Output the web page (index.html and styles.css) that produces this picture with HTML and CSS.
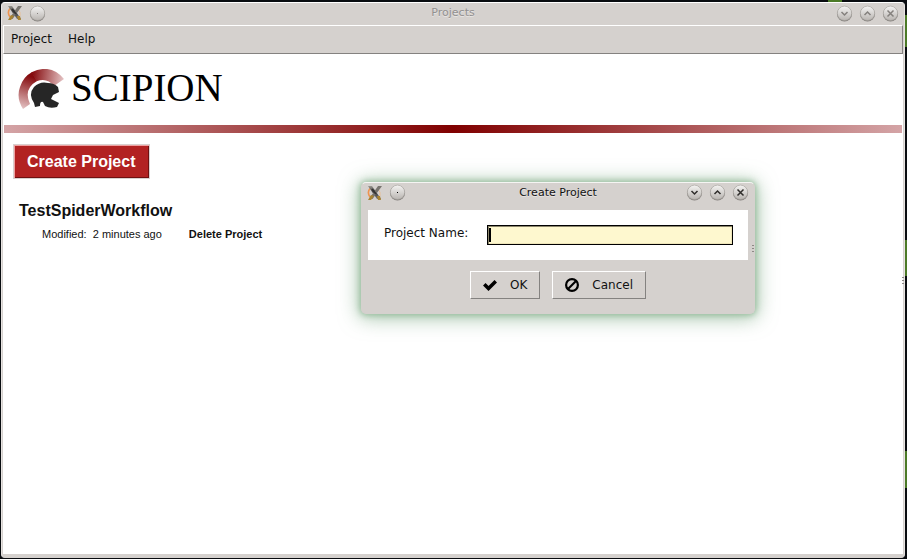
FILE: index.html
```
<!DOCTYPE html>
<html lang="en">
<head>
<meta charset="utf-8">
<title>Projects</title>
<link rel="stylesheet" href="styles.css">
</head>
<body>
<svg class="defs" aria-hidden="true">
  <defs>
    <linearGradient id="knob" x1="0" y1="0" x2="0" y2="1"><stop offset="0" stop-color="#f4f3f2"/><stop offset="1" stop-color="#b9b5b1"/></linearGradient>
    <linearGradient id="blade" x1="0" y1="0" x2="0" y2="1"><stop offset="0" stop-color="#99968f"/><stop offset=".5" stop-color="#3a3a3a"/><stop offset="1" stop-color="#777"/></linearGradient>
    <symbol id="x-logo" viewBox="0 0 16 16">
      <path d="M3.500 3Q-.5 7 3 12" fill="none" stroke="#ee9450" stroke-width="1.600"/>
      <path d="M11 4Q14 7 13 11" fill="none" stroke="#e8c098" stroke-width="1"/>
      <path d="M1 1h4l9 13h-4z" fill="url(#blade)"/>
      <path d="M11 1h4L5.500 14H2z" fill="#77746e"/>
      <path d="M4 10l3 1-3 4H1zM10 11h3l1 4h-3z" fill="#a98330"/>
      <path d="M5 4l4 5" stroke="#333" stroke-width="2"/>
    </symbol>
    <symbol id="disc" viewBox="0 0 17 17">
      <circle cx="8.5" cy="9" r="7.5" fill="#85817e"/>
      <circle cx="8.5" cy="8.3" r="7.2" fill="url(#knob)" stroke="#a19d99" stroke-width=".6"/>
    </symbol>
  </defs>
</svg>
<div class="desktop">
  <i class="leaf leaf-top"></i><i class="leaf leaf-a"></i><i class="leaf leaf-b"></i><i class="leaf leaf-c"></i>
  <main class="window">
    <header class="titlebar">
      <svg class="app-icon"><use href="#x-logo"/></svg>
      <button class="knob" aria-label="Window menu"><svg viewBox="0 0 17 17"><use href="#disc"/><path class="dot" d="M8 8h1v1H8z"/></svg></button>
      <h1 class="title">Projects</h1>
      <div class="controls">
        <button class="knob" aria-label="Minimize"><svg viewBox="0 0 17 17"><use href="#disc"/><path class="mark" d="M5.5 7l3 3 3-3"/></svg></button>
        <button class="knob" aria-label="Maximize"><svg viewBox="0 0 17 17"><use href="#disc"/><path class="mark" d="M5.5 10l3-3 3 3"/></svg></button>
        <button class="knob" aria-label="Close"><svg viewBox="0 0 17 17"><use href="#disc"/><path class="mark" d="M5.5 5.5l6 6m0-6l-6 6"/></svg></button>
      </div>
    </header>
    <nav class="menubar"><button class="menu">Project</button><button class="menu">Help</button></nav>
    <section class="content">
      <div class="brand">
        <svg class="helmet" viewBox="0 0 48 42" aria-hidden="true">
          <defs>
            <linearGradient id="crest" gradientUnits="userSpaceOnUse" x1="14" y1="8" x2="4" y2="40"><stop offset="0" stop-color="#850b0e"/><stop offset="1" stop-color="#e6c6c7"/></linearGradient>
            <linearGradient id="crest2" gradientUnits="userSpaceOnUse" x1="14" y1="8" x2="46" y2="12"><stop offset="0" stop-color="#850b0e"/><stop offset="1" stop-color="#e6c6c7"/></linearGradient>
          </defs>
          <path d="M5 40Q-2 29 2 18Q5 8 14 3L19 12Q5 20 12 35z" fill="url(#crest)"/>
          <path d="M13.500 3.300Q33 -6 46 10L36 17Q29 8 18.500 12.300z" fill="url(#crest2)"/>
          <path d="M17 38L16 34Q10 25 16 18Q22 12 30 14Q36 14 40 18L41 23L35 26L33 30L41 34L39 38Q32 40 27 37L25 33Q22 32 22 37z" fill="#262626"/>
        </svg>
        <span class="wordmark">SCIPION</span>
      </div>
      <div class="rule"></div>
      <div class="projects">
        <button class="create">Create Project</button>
        <article class="project">
          <h2 class="project-name">TestSpiderWorkflow</h2>
          <p class="meta"><span>Modified:&nbsp; 2 minutes ago</span><a class="delete" href="#">Delete Project</a></p>
        </article>
      </div>
    </section>
    <i class="grip"></i>
  </main>
  <form class="dialog" role="dialog" aria-labelledby="dialog-title">
    <header class="titlebar">
      <svg class="app-icon"><use href="#x-logo"/></svg>
      <button type="button" class="knob" aria-label="Window menu"><svg viewBox="0 0 17 17"><use href="#disc"/><path d="M8 8h1v1H8z"/></svg></button>
      <h2 class="title" id="dialog-title">Create Project</h2>
      <div class="controls">
        <button type="button" class="knob" aria-label="Minimize"><svg viewBox="0 0 17 17"><use href="#disc"/><path class="mark" d="M5.5 7l3 3 3-3"/></svg></button>
        <button type="button" class="knob" aria-label="Maximize"><svg viewBox="0 0 17 17"><use href="#disc"/><path class="mark" d="M5.5 10l3-3 3 3"/></svg></button>
        <button type="button" class="knob" aria-label="Close"><svg viewBox="0 0 17 17"><use href="#disc"/><path class="mark" d="M5.5 5.5l6 6m0-6l-6 6"/></svg></button>
      </div>
    </header>
    <div class="field">
      <label for="project-name">Project Name:</label>
      <div class="entry"><input id="project-name" type="text"><i class="caret"></i></div>
    </div>
    <div class="actions">
      <button type="button" class="action"><svg viewBox="0 0 14 14"><path d="M1.3 6.3L5.5 10.5L12.8 3.2" fill="none" stroke="#000" stroke-width="3.6"/></svg>OK</button>
      <button type="button" class="action"><svg viewBox="0 0 14 14"><circle cx="7" cy="7" r="5.9" fill="none" stroke="#000" stroke-width="2.2"/><path d="M3 11l8-8" stroke="#000" stroke-width="2.2"/></svg>Cancel</button>
    </div>
    <i class="grip"></i>
  </form>
</div>
</body>
</html>
```
FILE: styles.css
```
* { box-sizing: border-box; }
body { margin: 0; background: #090c10; color: #111; font: 12px/16px "DejaVu Sans", sans-serif; }
button { font: inherit; color: inherit; margin: 0; border: 0; padding: 0; background: none; }
h1, h2, p { margin: 0; }
.defs { position: absolute; width: 0; height: 0; }
.desktop { position: relative; display: flex; min-height: 100vh; padding: 2px 2px 1px 1px; overflow: hidden; }
.leaf { position: absolute; background: #4c7a27; }
.leaf-top { top: 0; right: 65px; width: 14px; height: 2px; }
.leaf-a { right: 0; top: 15px; width: 2px; height: 32px; }
.leaf-b { right: 0; top: 240px; width: 2px; height: 36px; }
.leaf-c { right: 0; top: 451px; width: 2px; height: 37px; }

.window { position: relative; flex: 1; display: flex; flex-direction: column; padding: 0 1px 3px; background: #d5d1ce; border: 1px solid #e8e4e2; border-top-color: #fff; border-bottom-color: #d5d1ce; border-radius: 4px; }
.titlebar { display: grid; grid-template-columns: 16px 17px 1fr auto; align-items: center; gap: 6px; height: 22px; padding: 0 4px 2px; }
.app-icon { width: 16px; height: 16px; }
.knob { width: 17px; height: 17px; }
.knob svg { display: block; width: 17px; height: 17px; }
.mark { fill: none; stroke: #2f2d2b; stroke-width: 1.5; }
.title { padding-left: 24px; font-size: 11px; font-weight: 400; text-align: center; text-shadow: 0 1px #e8e5e3; }
.controls { display: flex; gap: 6px; }
.window > .titlebar .title { color: #929090; }
.window > .titlebar .mark { stroke: #84807d; }
.window > .titlebar .dot { fill: #84807d; }

.menubar { display: flex; align-items: center; gap: 16px; height: 29px; padding: 0 0 1px 7px; border: 1px solid; border-color: #fff #848280 #848280 #fff; }
.content { flex: 1; background: #fff; padding: 0 1px; }
.brand { display: flex; align-items: center; gap: 5px; height: 71px; padding-left: 14px; }
.helmet { width: 48px; height: 42px; }
.wordmark { padding-bottom: 4px; font: 39px/42px "Liberation Serif", serif; color: #000; }
.rule { height: 8px; background: linear-gradient(90deg, #d4a4a6, #800000 50%, #d4a4a6); }
.projects { padding: 11px 9px; font-family: "Liberation Sans", sans-serif; }
.create { height: 35px; padding: 0 13px; border: 1px solid #d8d0cf; background: #b22222; box-shadow: inset 1px 1px #efa0a0, inset -1px -1px #701010; color: #fff; font-size: 16px; font-weight: 700; }
.project { padding: 22px 6px 0; }
.project-name { font-size: 16px; line-height: 20px; }
.meta { display: flex; gap: 27px; padding: 5px 0 0 23px; font-size: 11px; line-height: 16px; }
.delete { color: inherit; font-weight: 700; text-decoration: none; }
.grip { position: absolute; right: 0; top: 274px; width: 2px; height: 8px; background: repeating-linear-gradient(#8d8986 0 1px, transparent 1px 3px); }

.dialog { position: absolute; left: 361px; top: 182px; width: 394px; padding: 0 6px 14px; background: #d5d1ce; border: 1px solid #d5d1ce; border-top-color: #f5f5f3; border-radius: 5px; box-shadow: 0 0 6px 1px #86b38ccc, 0 2px 20px 2px #6b9c7599; }
.dialog .titlebar { height: 27px; padding: 0 0 8px; margin: 0 -1px; }
.dialog .grip { top: 62px; }
.field { display: flex; align-items: center; gap: 19px; height: 50px; padding: 0 15px 0 16px; background: #fff; }
.field label { padding-bottom: 4px; }
.entry { position: relative; flex: 1; display: flex; }
.entry input { width: 100%; height: 20px; padding: 0 4px; border: 1px solid #000; background: #fef8cf; box-shadow: inset 1px 1px #8c866c, inset -1px -1px #eee5b9; font: inherit; outline: 0; border-radius: 0; }
.caret { position: absolute; left: 2px; top: 3px; width: 2px; height: 14px; background: #000; }
.actions { display: flex; justify-content: center; gap: 12px; padding-top: 11px; }
.action { display: flex; align-items: center; gap: 13px; height: 28px; padding: 0 12px; border: 1px solid; border-color: #fff #848280 #848280 #fff; }
.action svg { width: 14px; height: 14px; }
```
